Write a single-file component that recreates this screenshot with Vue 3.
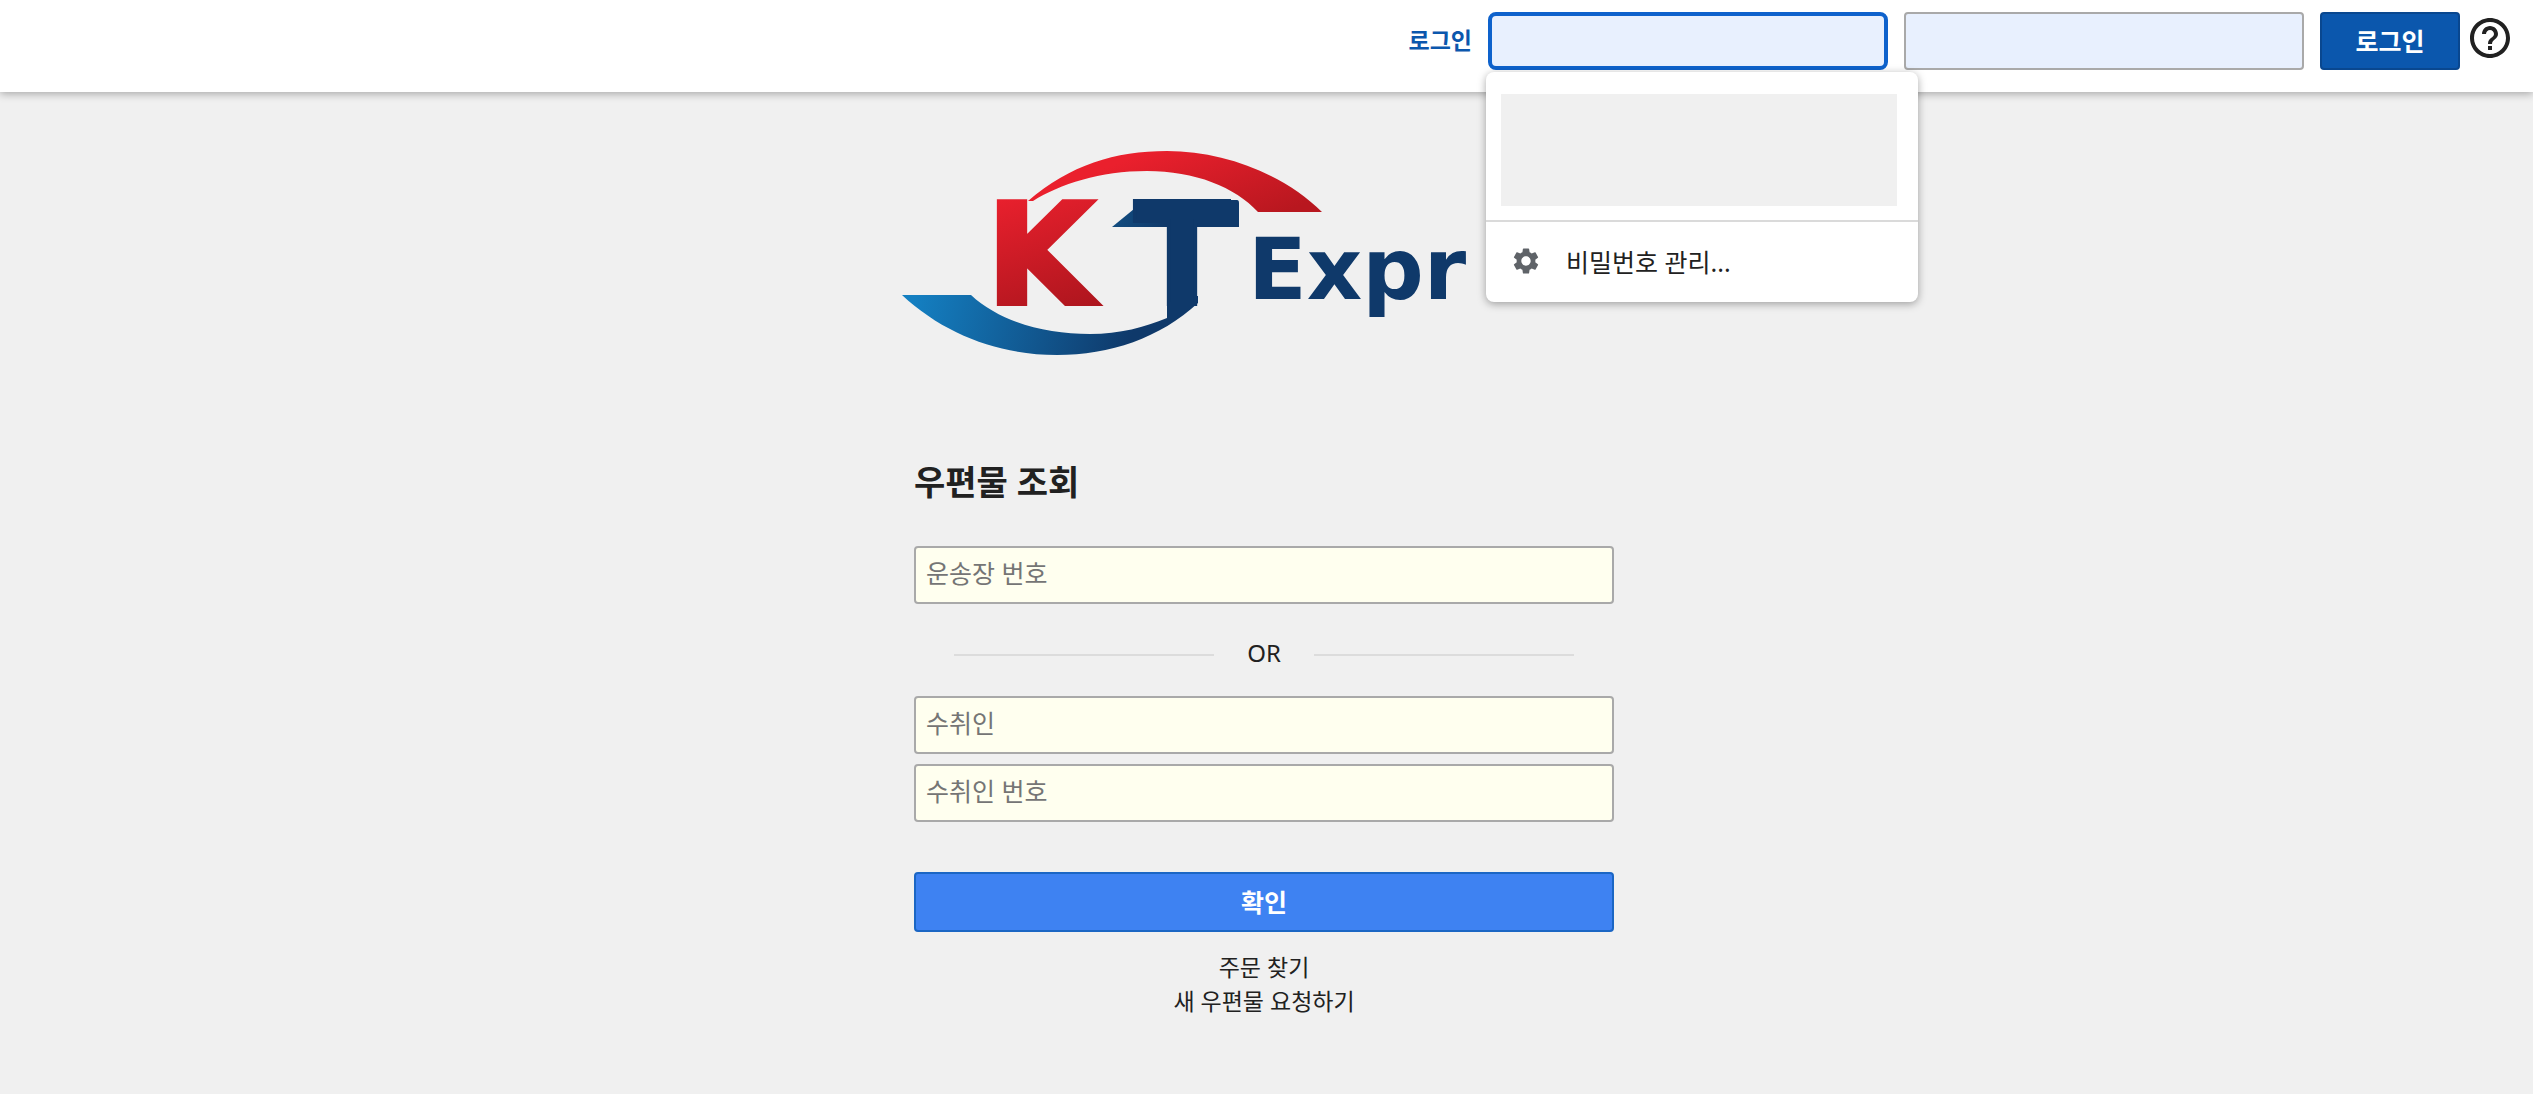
<template>
  <div class="page">
    <header class="topbar">
      <form class="login-form" @submit.prevent>
        <label class="login-label" for="login-id">로그인</label>
        <div class="login-field">
          <input id="login-id" v-model="loginId" class="login-input active" type="text" />

          <!-- Saved password suggestions -->
          <div class="suggest">
            <div class="suggest-list"></div>
            <button type="button" class="suggest-manage">
              <svg class="gear-icon" viewBox="2 2 20 20" fill="currentColor">
                <path d="M19.14 12.94c.04-.3.06-.61.06-.94 0-.32-.02-.64-.07-.94l2.03-1.58c.18-.14.23-.41.12-.61l-1.92-3.32c-.12-.22-.37-.29-.59-.22l-2.39.96c-.5-.38-1.03-.7-1.62-.94l-.36-2.54c-.04-.24-.24-.41-.48-.41h-3.84c-.24 0-.43.17-.47.41l-.36 2.54c-.59.24-1.13.57-1.62.94l-2.39-.96c-.22-.08-.47 0-.59.22L2.74 8.87c-.12.21-.08.47.12.61l2.03 1.58c-.05.3-.09.63-.09.94s.02.64.07.94l-2.03 1.58c-.18.14-.23.41-.12.61l1.92 3.32c.12.22.37.29.59.22l2.39-.96c.5.38 1.03.7 1.62.94l.36 2.54c.05.24.24.41.48.41h3.84c.24 0 .44-.17.47-.41l.36-2.54c.59-.24 1.13-.56 1.62-.94l2.39.96c.22.08.47 0 .59-.22l1.92-3.32c.12-.22.07-.47-.12-.61l-2.01-1.58zM12 15.6c-1.98 0-3.6-1.62-3.6-3.6s1.62-3.6 3.6-3.6 3.6 1.62 3.6 3.6-1.62 3.6-3.6 3.6z" />
              </svg>
              비밀번호 관리...
            </button>
          </div>
        </div>
        <input v-model="loginPw" class="login-input" type="password" aria-label="비밀번호" />
        <button type="submit" class="login-btn">로그인</button>
      </form>
      <a href="#help" class="help-link" aria-label="도움말">
        <svg width="40" height="40" viewBox="2 2 20 20" fill="currentColor">
          <path d="M11 18h2v-2h-2v2zm1-16C6.48 2 2 6.48 2 12s4.48 10 10 10 10-4.48 10-10S17.52 2 12 2zm0 18c-4.41 0-8-3.59-8-8s3.59-8 8-8 8 3.59 8 8-3.59 8-8 8zm0-14c-2.21 0-4 1.79-4 4h2c0-1.1.9-2 2-2s2 .9 2 2c0 2-3 1.75-3 5h2c0-2.25 3-2.5 3-5 0-2.21-1.79-4-4-4z" />
        </svg>
      </a>
    </header>

    <main class="content">
      <svg class="logo" viewBox="900 150 728 206" role="img" aria-label="KT Express">
        <defs>
          <linearGradient id="red" gradientUnits="userSpaceOnUse" x1="1030" y1="190" x2="1070" y2="320">
            <stop offset="0" stop-color="#e8202d" />
            <stop offset="1" stop-color="#ab151d" />
          </linearGradient>
          <linearGradient id="redArc" gradientUnits="userSpaceOnUse" x1="1150" y1="150" x2="1190" y2="250">
            <stop offset="0" stop-color="#ea202d" />
            <stop offset="1" stop-color="#b8171f" />
          </linearGradient>
          <linearGradient id="blue" gradientUnits="userSpaceOnUse" x1="915" y1="295" x2="1130" y2="345">
            <stop offset="0" stop-color="#147fc1" />
            <stop offset="1" stop-color="#0f396a" />
          </linearGradient>
          <linearGradient id="wing" gradientUnits="userSpaceOnUse" x1="1112" y1="215" x2="1165" y2="222">
            <stop offset="0" stop-color="#124d80" />
            <stop offset="1" stop-color="#0f396a" />
          </linearGradient>
        </defs>
        <path fill="url(#redArc)" d="M1028 201C1070 165 1115 151 1167 151C1225 151 1285 175 1322 212H1258C1235 187 1195 171 1147 171C1100 171 1060 184 1033 201Z" />
        <path fill="url(#blue)" d="M902 295H971C1000 322 1045 334 1090 334C1120 334 1145 327 1167 318V296H1198V303C1160 338 1110 355 1057 355C1000 355 945 335 902 295Z" />
        <path fill="url(#wing)" d="M1112 227L1145 200H1237Q1239 200 1239 203V227Z" />
        <text class="logo-mark" x="986" y="304" fill="url(#red)" stroke="url(#red)">K</text>
        <text class="logo-mark logo-navy" x="1182" y="304" text-anchor="middle">T</text>
        <text class="logo-word logo-navy" x="1248" y="299">Expr</text>
      </svg>

      <form class="track-form" @submit.prevent>
        <h1 class="track-title">우편물 조회</h1>
        <input v-model="tracking.number" class="track-input" type="text" placeholder="운송장 번호" aria-label="운송장 번호" />
        <div class="divider"><span>OR</span></div>
        <div class="track-group">
          <input v-model="tracking.recipient" class="track-input" type="text" placeholder="수취인" aria-label="수취인" />
          <input v-model="tracking.phone" class="track-input" type="text" placeholder="수취인 번호" aria-label="수취인 번호" />
        </div>
        <button type="submit" class="track-btn">확인</button>
      </form>

      <nav class="links">
        <a v-for="item in links" :key="item.name" :href="item.link">{{ item.name }}</a>
      </nav>
    </main>
  </div>
</template>

<script setup>
import { ref, reactive } from 'vue';

const loginId = ref('');
const loginPw = ref('');

const tracking = reactive({
  number: '',
  recipient: '',
  phone: '',
});

const links = [
  { name: '주문 찾기', link: '#orders' },
  { name: '새 우편물 요청하기', link: '#request' },
];
</script>

<style>
body {
  background: #f0f0f0;
}
</style>

<style scoped>
.page {
  min-height: 100vh;
  background: #f0f0f0;
  color: #212121;
  font-family: 'Noto Sans', 'Noto Sans CJK KR', sans-serif;
  font-size: 24px;
}

.page * {
  box-sizing: border-box;
}

input,
button {
  font-family: inherit;
  margin: 0;
}

/* Top bar */
.topbar {
  position: relative;
  z-index: 10;
  display: flex;
  justify-content: flex-end;
  align-items: flex-start;
  gap: 10px;
  padding: 12px 23px 22px;
  background: #ffffff;
  box-shadow: 0 2px 8px rgba(0, 0, 0, 0.3);
}

.login-form {
  display: flex;
  align-items: center;
  gap: 16px;
}

.login-label {
  padding-bottom: 4px;
  color: #0b57ad;
  font-size: 23px;
  font-weight: 700;
}

.login-field {
  position: relative;
}

.login-input {
  display: block;
  width: 400px;
  height: 58px;
  padding: 0 12px;
  border: 2px solid #a9a9a9;
  border-radius: 4px;
  background: #e8f0fe;
  font-size: 24px;
  outline: none;
}

.login-input.active {
  border: 4px solid #0e62cc;
  border-radius: 8px;
}

.login-btn {
  width: 140px;
  height: 58px;
  padding: 0 0 2px;
  border: 2px solid #09478f;
  border-radius: 4px;
  background: #0b57ad;
  color: #ffffff;
  font-size: 25px;
  font-weight: 700;
  cursor: pointer;
}

.help-link {
  display: flex;
  margin-top: 6px;
  color: #212121;
}

/* Suggestion popup */
.suggest {
  position: absolute;
  top: 60px;
  left: -2px;
  width: 432px;
  background: #ffffff;
  border-radius: 8px;
  box-shadow: 0 2px 8px rgba(0, 0, 0, 0.35);
}

.suggest-list {
  height: 112px;
  margin: 22px 21px 14px 15px;
  background: #f0f0f0;
}

.suggest-manage {
  display: flex;
  align-items: center;
  gap: 27px;
  width: 100%;
  height: 82px;
  padding: 0 27px 2px;
  border: none;
  border-top: 2px solid #dadada;
  background: none;
  color: #212121;
  font-size: 25px;
  cursor: pointer;
}

.gear-icon {
  width: 26px;
  height: 26px;
  color: #5f6368;
}

/* Content */
.content {
  display: flex;
  flex-direction: column;
  align-items: center;
  padding: 58px 5px 60px 0;
}

.logo {
  width: 728px;
  max-width: 100%;
}

.logo-mark {
  font-family: 'DejaVu Sans', sans-serif;
  font-size: 140px;
  font-weight: 700;
  stroke-width: 4px;
}

.logo-word {
  font-family: 'DejaVu Sans', sans-serif;
  font-size: 86px;
  font-weight: 700;
}

.logo-navy {
  fill: #0f396a;
}

.logo-mark.logo-navy {
  stroke: #0f396a;
}

.track-form {
  display: flex;
  flex-direction: column;
  width: 700px;
  max-width: 100%;
  margin-top: 100px;
}

.track-title {
  margin: 0 0 38px;
  font-size: 34px;
  line-height: 52px;
  font-weight: 700;
}

.track-input {
  width: 100%;
  height: 58px;
  padding: 0 10px 4px;
  border: 2px solid #a9a9a9;
  border-radius: 4px;
  background: #ffffef;
  color: #212121;
  font-size: 25px;
}

.track-input::placeholder {
  color: #757575;
  opacity: 1;
}

.divider {
  display: flex;
  align-items: center;
  margin: 34px 40px 24px;
  line-height: 30px;
}

.divider::before,
.divider::after {
  content: "";
  flex: 1;
  height: 2px;
  background: #dcdcdc;
}

.divider span {
  width: 100px;
  padding-bottom: 4px;
  text-align: center;
}

.track-group {
  display: flex;
  flex-direction: column;
  gap: 10px;
}

.track-btn {
  height: 60px;
  margin-top: 50px;
  padding: 0 0 2px;
  border: 2px solid #1b66c4;
  border-radius: 4px;
  background: #3e82f2;
  color: #ffffff;
  font-size: 25px;
  font-weight: 700;
  cursor: pointer;
}

.links {
  display: flex;
  flex-direction: column;
  align-items: center;
  margin-top: 18px;
}

.links a {
  color: #212121;
  font-size: 23px;
  line-height: 34px;
  text-decoration: none;
}
</style>
